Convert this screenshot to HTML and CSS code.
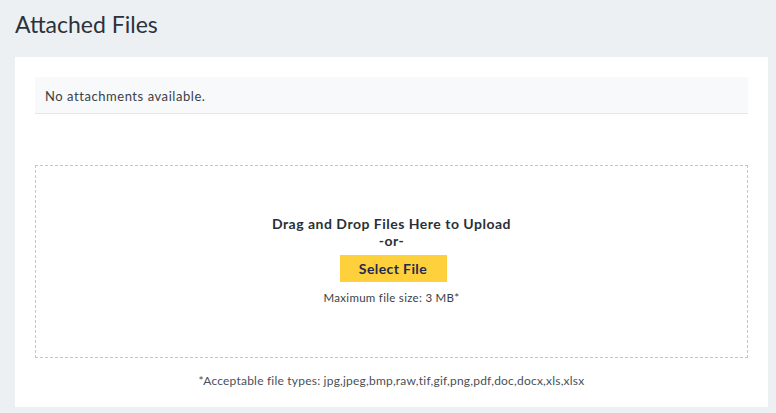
FILE: index.html
```html
<!DOCTYPE html>
<html>
<head>
<meta charset="utf-8">
<link rel="stylesheet" href="styles.css">
</head>
<body>
<div class="page">
  <h1 class="title">Attached Files</h1>
  <div class="card">
    <div class="empty-row">No attachments available.</div>
    <div class="dropzone">
      <div class="drop-title">Drag and Drop Files Here to Upload</div>
      <div class="drop-or">-or-</div>
      <button class="select-btn">Select File</button>
      <div class="max-size">Maximum file size: 3 MB*</div>
    </div>
    <div class="types">*Acceptable file types: jpg,jpeg,bmp,raw,tif,gif,png,pdf,doc,docx,xls,xlsx</div>
  </div>
</div>
</body>
</html>
```

FILE: styles.css
```css
html, body {
  margin: 0;
  padding: 0;
  background: #edf0f3;
  font-family: Lato, "Open Sans", sans-serif;
  color: #333a44;
}
.page {
  padding: 0 8px 0 15px;
}
.title {
  margin: 0;
  height: 57px;
  box-sizing: border-box;
  padding-top: 10px;
  font-size: 23px;
  font-weight: 400;
  color: #2c323b;
  letter-spacing: 0;
}
.card {
  background: #fff;
  padding: 20px 20px 0 20px;
  height: 350px;
  box-sizing: border-box;
}
.empty-row {
  background: #f8f9fb;
  border-bottom: 1px solid #e4e7eb;
  height: 37px;
  box-sizing: border-box;
  padding: 11px 10px 0 10px;
  font-size: 13px;
  color: #3a3f46;
  letter-spacing: 0.55px;
}
.dropzone {
  margin-top: 51px;
  height: 193px;
  box-sizing: border-box;
  border: 1px dashed #c4c6c9;
  display: flex;
  flex-direction: column;
  align-items: center;
  padding-top: 49px;
}
.drop-title {
  font-size: 14px;
  font-weight: 700;
  color: #2a2f37;
  letter-spacing: 0.5px;
  line-height: 18px;
}
.drop-or {
  font-size: 14px;
  font-weight: 700;
  color: #2a2f37;
  line-height: 16px;
  letter-spacing: 0.5px;
}
.select-btn {
  margin-top: 6px;
  margin-left: 3px;
  width: 107px;
  height: 27px;
  border: none;
  background: #fed03c;
  color: #1f2b4d;
  font-family: Lato, "Open Sans", sans-serif;
  font-weight: 700;
  font-size: 14px;
  letter-spacing: 0.4px;
  padding: 0;
}
.max-size {
  margin-top: 9px;
  font-size: 11.5px;
  color: #3a3f46;
  letter-spacing: 0.3px;
}
.types {
  text-align: center;
  font-size: 12px;
  color: #4a5058;
  margin-top: 15px;
  letter-spacing: 0.21px;
}
```
